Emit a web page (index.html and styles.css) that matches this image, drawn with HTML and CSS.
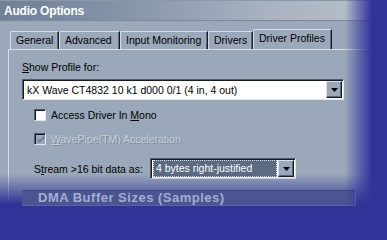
FILE: index.html
```html
<!DOCTYPE html>
<html>
<head>
<meta charset="utf-8">
<link rel="stylesheet" href="styles.css">
</head>
<body>
<div class="window">
  <div class="titlebar"><span class="title">Audio Options</span></div>
  <div class="tabs">
    <div class="tab t-general">General</div>
    <div class="tab t-advanced">Advanced</div>
    <div class="tab t-input">Input Monitoring</div>
    <div class="tab t-drivers">Drivers</div>
    <div class="tab t-profiles active">Driver Profiles</div>
  </div>
  <div class="panel">
    <div class="label"><u>S</u>how Profile for:</div>
    <div class="combo combo-wide">
      <span class="combo-value">kX Wave CT4832 10 k1 d000 0/1 (4 in, 4 out)</span>
      <span class="drop"><svg width="7" height="4" viewBox="0 0 7 4"><path d="M0 0h7L3.5 4z" fill="#000"/></svg></span>
    </div>
    <div class="check">
      <span class="box"></span>
      <span class="check-label">Access Driver In <u>M</u>ono</span>
    </div>
    <div class="check disabled">
      <span class="box box-disabled"><svg width="8" height="8" viewBox="0 0 8 8"><path d="M0.5 3.5l2 2 5-5" fill="none" stroke="#6c7a8b" stroke-width="1.6"/></svg></span>
      <span class="check-label"><u>W</u>avePipe(TM) Acceleration</span>
    </div>
    <div class="stream-row">
      <span class="stream-label">S<u>t</u>ream &gt;16 bit data as:</span>
      <div class="combo combo-small">
        <span class="combo-value selected">4 bytes right-justified</span>
        <span class="drop"><svg width="7" height="4" viewBox="0 0 7 4"><path d="M0 0h7L3.5 4z" fill="#000"/></svg></span>
      </div>
    </div>
    <div class="group-head">DMA Buffer Sizes (Samples)</div>
  </div>
  <div class="fade-right"></div>
  <div class="fade-bottom"></div>
</div>
</body>
</html>
```
FILE: styles.css
```css
html, body {
  margin: 0;
  padding: 0;
}
body {
  width: 387px;
  height: 240px;
  overflow: hidden;
  background: #9aa8b9;
  font-family: "Liberation Sans", Arial, sans-serif;
  font-size: 10.5px;
  color: #000;
}
.window {
  position: relative;
  width: 387px;
  height: 240px;
  overflow: hidden;
  background: #9aa8b9;
}
.titlebar {
  box-sizing: border-box;
  height: 21px;
  border-top: 1px solid #8a98aa;
  border-bottom: 1px solid #7d8a9b;
  background: linear-gradient(to right, #6f8097 0%, #8393a8 30%, #a9b3c1 70%, #b8c0cc 100%);
  padding-left: 4px;
  display: flex;
  align-items: center;
}
.title {
  color: #fff;
  font-weight: bold;
  font-size: 12px;
  letter-spacing: -0.2px;
}
.tabs {
  display: flex;
  align-items: flex-end;
  height: 20px;
  margin-top: 8px;
  padding-left: 10px;
}
.tab {
  box-sizing: border-box;
  height: 18px;
  line-height: 16px;
  padding-left: 5px;
  border-left: 1px solid #d6dde6;
  border-top: 1px solid #d6dde6;
  border-right: 1px solid #151b22;
  border-top-left-radius: 2px;
  box-shadow: inset -1px 0 0 #5c6878;
  white-space: nowrap;
}
.tab.active {
  height: 20px;
  line-height: 17px;
}
.t-general { width: 49px; }
.t-advanced { width: 61px; }
.t-input { width: 88px; }
.t-drivers { width: 45px; }
.t-profiles { width: 79px; }
.panel {
  margin-left: 8px;
  width: 350px;
  border-left: 1px solid #d6dde6;
  border-top: 1px solid #d6dde6;
  padding: 11px 0 0 13px;
  height: 200px;
}
.label {
  height: 13px;
  line-height: 13px;
}
.combo {
  box-sizing: border-box;
  height: 21px;
  display: flex;
  align-items: center;
  background: #fff;
  border: 1px solid;
  border-color: #4f5c6d #e2e7ee #e2e7ee #4f5c6d;
  box-shadow: inset 1px 1px 0 #151b22;
  padding: 1px 1px 1px 2px;
}
.combo-wide {
  width: 322px;
  margin-top: 5px;
}
.combo-value {
  flex: 1;
  padding-left: 2px;
  white-space: nowrap;
  overflow: hidden;
}
.combo-value.selected {
  background: #5a6b82;
  color: #fff;
  outline: 1px dotted #d8dee6;
  outline-offset: -1px;
  height: 17px;
  line-height: 16px;
  margin-right: 1px;
  padding-left: 3px;
}
.drop {
  box-sizing: border-box;
  width: 16px;
  height: 17px;
  background: #9aa8b9;
  border: 1px solid;
  border-color: #dbe1e8 #151b22 #151b22 #dbe1e8;
  box-shadow: inset -1px -1px 0 #5c6878;
  display: flex;
  align-items: center;
  justify-content: center;
}
.check {
  display: flex;
  align-items: center;
  height: 14px;
  margin-left: 12px;
  margin-top: 8px;
}
.check.disabled {
  margin-top: 10px;
}
.box {
  box-sizing: border-box;
  width: 12px;
  height: 12px;
  background: #fff;
  border: 1px solid;
  border-color: #4f5c6d #e2e7ee #e2e7ee #4f5c6d;
  box-shadow: inset 1px 1px 0 #151b22;
  display: flex;
  align-items: center;
  justify-content: center;
  margin-right: 5px;
}
.box-disabled {
  background: #9aa8b9;
  padding: 1px 0 0 1px;
}
.disabled .check-label {
  color: #c8d0db;
  text-shadow: 1px 1px 0 #7f8d9e;
}
.stream-row {
  display: flex;
  align-items: center;
  margin-top: 12px;
  margin-left: 12px;
}
.stream-label {
  width: 116px;
}
.combo-small {
  width: 146px;
}
.group-head {
  position: relative;
  z-index: 2;
  box-sizing: border-box;
  width: 334px;
  height: 16px;
  margin-top: 11px;
  background: #4b5591;
  border-top: 1px solid #414b88;
  border-right: 1px solid #6c74b0;
  border-bottom: 1px solid #5a62ae;
  color: #a3aed2;
  font-weight: bold;
  font-size: 13px;
  line-height: 14px;
  padding-left: 16px;
  letter-spacing: 0.5px;
  white-space: nowrap;
}
.fade-right {
  position: absolute;
  top: 0;
  right: 0;
  width: 42px;
  height: 240px;
  background: linear-gradient(to right, rgba(49, 51, 153, 0) 0px, rgba(49, 51, 153, 0.55) 14px, rgba(49, 51, 153, 1) 27px);
  z-index: 3;
}
.fade-bottom {
  position: absolute;
  left: 0;
  top: 174px;
  width: 387px;
  height: 66px;
  background: linear-gradient(to bottom, rgba(49, 51, 153, 0) 0px, rgba(49, 51, 153, 0.45) 14px, rgba(49, 51, 153, 1) 30px);
  z-index: 1;
}
```
